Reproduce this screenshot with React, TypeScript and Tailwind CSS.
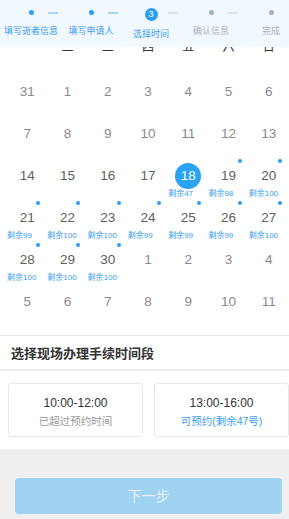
import React from 'react';

const FONT = { fontFamily: '"Liberation Sans", "Noto Sans CJK SC", sans-serif' };

type Day = { n: number; tone: 'past' | 'cur' | 'next'; left?: number; selected?: boolean };

const steps = [
	{ label: '填写逝者信息', state: 'done' },
	{ label: '填写申请人', state: 'done' },
	{ label: '选择时间', state: 'current' },
	{ label: '确认信息', state: 'todo' },
	{ label: '完成', state: 'todo' },
];

const week = ['一', '二', '三', '四', '五', '六', '日'];

const left: Record<number, number> = {
	18: 47, 19: 98, 20: 100, 21: 99, 22: 100, 23: 100, 24: 99, 25: 99, 26: 99, 27: 100, 28: 100, 29: 100, 30: 100,
};

const buildDays = (): Day[] => {
	const days: Day[] = [{ n: 31, tone: 'past' }];
	for (let i = 1; i <= 30; i++) {
		days.push({
			n: i,
			tone: i < 14 ? 'past' : 'cur',
			left: left[i],
			selected: i === 18,
		});
	}
	for (let i = 1; i <= 11; i++) days.push({ n: i, tone: 'next' });
	return days;
};

const StepBar = () => (
	<div className="absolute left-0 top-0 z-10 flex h-[47px] w-full overflow-hidden bg-[#f1f8fe] pl-[1px]">
		{steps.map((s, i) => (
			<div key={s.label} className="relative flex w-[60px] shrink-0 flex-col items-center">
				{s.state === 'current' ? (
					<div className="mt-[8px] flex h-[13px] w-[13px] items-center justify-center rounded-full bg-[#2a9ef2] text-[9px] leading-none text-white">
						3
					</div>
				) : (
					<div
						className={`mt-[10px] h-[5px] w-[5px] rounded-full ${s.state === 'done' ? 'bg-[#2a9ef2]' : 'bg-[#9db3c4]'}`}
					/>
				)}
				<div
					className={`whitespace-nowrap text-[9px] leading-[12px] ${s.state === 'current' ? 'mt-[7px]' : 'mt-[10px]'} ${s.state === 'todo' ? 'text-[#a9b4bd]' : 'text-[#3a9ef0]'}`}
				>
					{s.label}
				</div>
				{i < steps.length - 1 && (
					<div
						className={`absolute left-[47px] top-[12px] h-[1.5px] w-[10px] ${i < 2 ? 'bg-[#a8d3f5]' : 'bg-[#dde3e8]'}`}
					/>
				)}
			</div>
		))}
	</div>
);

const DayCell = ({ d }: { d: Day }) => {
	const color = d.tone === 'cur' ? 'text-[#606060]' : 'text-[#8a8a8a]';
	return (
		<div className="relative flex h-[42px] flex-col items-center pt-[10px]">
			{d.left !== undefined && !d.selected && (
				<span className="absolute left-[calc(50%+9px)] top-[3px] h-[4px] w-[4px] rounded-full bg-[#2a9ef2]" />
			)}
			<div className="relative flex h-[20px] items-center justify-center">
				{d.selected && (
					<span className="absolute left-1/2 top-1/2 h-[26px] w-[26px] -translate-x-1/2 -translate-y-1/2 rounded-full bg-[#2aa3f5]" />
				)}
				<span className={`relative text-[13.5px] leading-[20px] ${d.selected ? 'text-white' : color}`}>{d.n}</span>
			</div>
			{d.left !== undefined && (
				<div className="mt-[3px] self-start whitespace-nowrap text-[8px] leading-[10px] text-[#3a9ef0]">
					剩余{d.left}
				</div>
			)}
		</div>
	);
};

export default function App() {
	const days = buildDays();
	return (
		<div style={FONT} className="relative h-[519px] w-full overflow-hidden bg-white">
			<StepBar />
			<div className="pl-[7px] pt-[38px]">
				<div className="grid grid-cols-7">
					{week.map((w) => (
						<div key={w} className="text-center text-[12px] leading-[18px] text-[#333]">
							{w}
						</div>
					))}
				</div>
				<div className="mt-[16px] grid grid-cols-7 pb-[11px]">
					{days.map((d, i) => (
						<DayCell key={i} d={d} />
					))}
				</div>
			</div>
			<div className="h-[1px] bg-[#e6e6e6]" />
			<div className="flex h-[33px] items-center pl-[11px] pt-[2px] text-[13px] font-bold text-[#333]">
				选择现场办理手续时间段
			</div>
			<div className="h-[2px] bg-[#eeeeee]" />
			<div className="flex gap-[11px] pb-[12px] pl-[8px] pt-[12px]">
				<div className="flex h-[54px] w-[135px] shrink-0 flex-col items-center rounded-[3px] border border-[#e8e8e8] pt-[10px]">
					<div className="text-[12px] leading-[18px] text-[#333]">10:00-12:00</div>
					<div className="text-[10.5px] leading-[18px] text-[#999]">已超过预约时间</div>
				</div>
				<div className="flex h-[54px] w-[135px] shrink-0 flex-col items-center rounded-[3px] border border-[#e8e8e8] pt-[10px]">
					<div className="text-[12px] leading-[18px] text-[#333]">13:00-16:00</div>
					<div className="text-[10.5px] leading-[18px] text-[#3a9ef0]">可预约(剩余47号)</div>
				</div>
			</div>
			<div className="h-full bg-[#efefef] px-[15px] pt-[29px]">
				<button className="flex h-[36px] w-[267px] items-center justify-center rounded-[4px] bg-[#a0d2f2] text-[14px] text-[#e4f2fc]">
					下一步
				</button>
			</div>
		</div>
	);
}
